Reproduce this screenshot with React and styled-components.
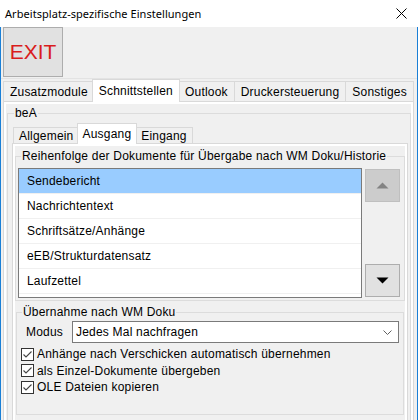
import React from "react";
import styled, { createGlobalStyle } from "styled-components";

const GlobalStyle = createGlobalStyle`
  html, body {
    margin: 0;
    padding: 0;
    background: #ffffff;
  }
  body {
    font-family: "Liberation Sans", Arial, sans-serif;
    font-size: 12px;
    letter-spacing: 0.2px;
    color: #000000;
  }
  * {
    box-sizing: border-box;
  }
`;

const Window = styled.div`
  width: 418px;
  height: 420px;
  overflow: hidden;
  display: flex;
  flex-direction: column;
  background: #ffffff;
`;

const TitleBar = styled.div`
  height: 27px;
  flex: none;
  display: flex;
  align-items: center;
  justify-content: space-between;
  padding: 0 11px 0 5px;
  font-family: "Noto Sans", sans-serif;
  font-size: 11px;
  letter-spacing: 0.05px;
  background: #ffffff;
`;

const Body = styled.div`
  flex: 1;
  min-height: 0;
  overflow: hidden;
  background: #f0f0f0;
  border-left: 1px solid #1a7fd6;
  border-right: 1px solid #1a7fd6;
`;

const Toolbar = styled.div`
  height: 52px;
  padding: 0 2px;
  display: flex;
  align-items: flex-start;
  border-bottom: 1px solid #e3e3e3;
`;

const ExitButton = styled.button`
  width: 60px;
  height: 50px;
  margin: 0;
  padding: 0;
  background: #e1e1e1;
  border: 1px solid #adadad;
  color: #d91c1c;
  font-family: "Liberation Sans", Arial, sans-serif;
  font-size: 21px;
`;

const TabControl = styled.div`
  margin: ${(p) => p.margin};
`;

const TabStrip = styled.div`
  display: flex;
  align-items: flex-end;
  height: ${(p) => p.height}px;
  padding-left: ${(p) => p.indent}px;
`;

const Tab = styled.div`
  position: relative;
  display: flex;
  align-items: center;
  padding: 0 ${(p) => p.pad}px;
  border: 1px solid #d9d9d9;
  border-bottom: none;
  white-space: nowrap;
  height: ${(p) => (p.$active ? p.tall + 1 : p.short)}px;
  margin: ${(p) => (p.$active ? "0 -2px -1px -2px" : "0 -1px 0 0")};
  background: ${(p) => (p.$active ? "#ffffff" : "#f0f0f0")};
  z-index: ${(p) => (p.$active ? 2 : 1)};
  padding-top: ${(p) => (p.$active ? 0 : 1)}px;
`;

const TabPanel = styled.div`
  border: 1px solid #d9d9d9;
  background: #ffffff;
  padding: 2px;
`;

const TabPage = styled.div`
  background: #f0f0f0;
  padding: ${(p) => p.pad};
`;

const Group = styled.fieldset`
  margin: ${(p) => p.margin};
  padding: ${(p) => p.pad};
  border: 1px solid #dcdcdc;
  min-width: 0;
`;

const Legend = styled.legend`
  margin-left: ${(p) => p.offset}px;
  padding: 0 1px;
  line-height: 14px;
  font-size: 12px;
`;

const OrderRow = styled.div`
  display: flex;
  margin: 5px 4px 0 2px;
  gap: 3px;
`;

const List = styled.div`
  width: 346px;
  height: 130px;
  background: #ffffff;
  border: 1px solid #7a7a7a;
`;

const ListItem = styled.div`
  height: 25px;
  display: flex;
  align-items: center;
  padding-left: 8px;
  border-bottom: 1px solid #f0f0f0;
  background: ${(p) => (p.$selected ? "#99ccff" : "#ffffff")};
`;

const ButtonColumn = styled.div`
  width: 35px;
  height: 130px;
  padding: 1px 0;
  display: flex;
  flex-direction: column;
  justify-content: space-between;
`;

const MoveButton = styled.button`
  width: 35px;
  height: 33px;
  margin: 0;
  padding: 0;
  display: flex;
  align-items: center;
  justify-content: center;
  background: ${(p) => (p.disabled ? "#cccccc" : "#e1e1e1")};
  border: 1px solid ${(p) => (p.disabled ? "#bfbfbf" : "#adadad")};
`;

const ModeRow = styled.div`
  display: flex;
  align-items: center;
  height: 22px;
  margin: 2px 4px 0 9px;
`;

const ModeLabel = styled.span`
  width: 46px;
`;

const Select = styled.div`
  flex: 1;
  height: 22px;
  display: flex;
  align-items: center;
  justify-content: space-between;
  padding: 0 6px 0 3px;
  background: #ffffff;
  border: 1px solid #7a7a7a;
`;

const CheckList = styled.div`
  margin-top: 3px;
  padding-left: 4px;
`;

const CheckRow = styled.label`
  display: flex;
  align-items: center;
  gap: 3px;
  height: 16.5px;
`;

const CloseIcon = () => (
  <svg width="11" height="11" viewBox="0 0 11 11">
    <path d="M0.5 0.5 L10.5 10.5 M10.5 0.5 L0.5 10.5" stroke="#000" strokeWidth="1" />
  </svg>
);

const Triangle = ({ up, color }) => (
  <svg width="13" height="7" viewBox="0 0 13 7">
    <polygon points={up ? "0.5,6.5 6.5,0.5 12.5,6.5" : "0.5,0.5 12.5,0.5 6.5,6.5"} fill={color} />
  </svg>
);

const Chevron = () => (
  <svg width="9" height="5" viewBox="0 0 9 5">
    <polyline points="0.5,0.5 4.5,4.5 8.5,0.5" fill="none" stroke="#606060" strokeWidth="1" />
  </svg>
);

const CheckBox = () => (
  <svg width="13" height="13" viewBox="0 0 13 13">
    <rect x="0.5" y="0.5" width="12" height="12" fill="#fff" stroke="#333" />
    <polyline points="2.5,6.5 5,9 10.5,3.5" fill="none" stroke="#444" strokeWidth="1.1" />
  </svg>
);

const outerTabs = ["Zusatzmodule", "Schnittstellen", "Outlook", "Druckersteuerung", "Sonstiges"];
const innerTabs = ["Allgemein", "Ausgang", "Eingang"];
const documents = [
  "Sendebericht",
  "Nachrichtentext",
  "Schriftsätze/Anhänge",
  "eEB/Strukturdatensatz",
  "Laufzettel",
];
const options = [
  "Anhänge nach Verschicken automatisch übernehmen",
  "als Einzel-Dokumente übergeben",
  "OLE Dateien kopieren",
];

const App = () => {
  return (
    <Window>
      <GlobalStyle />
      <TitleBar>
        <span>Arbeitsplatz-spezifische Einstellungen</span>
        <CloseIcon />
      </TitleBar>
      <Body>
        <Toolbar>
          <ExitButton>EXIT</ExitButton>
        </Toolbar>
        <TabControl margin="0 3px 0 2px">
          <TabStrip height={22} indent={0}>
            {outerTabs.map((t) => (
              <Tab key={t} $active={t === "Schnittstellen"} tall={22} short={20} pad={6}>
                {t}
              </Tab>
            ))}
          </TabStrip>
          <TabPanel>
            <TabPage pad="2px 0 0 0">
              <Group margin="0 0 0 1px" pad="0">
                <Legend offset={6}>beA</Legend>
                <TabControl margin="3px 2px 0 4px">
                  <TabStrip height={20} indent={1}>
                    {innerTabs.map((t) => (
                      <Tab key={t} $active={t === "Ausgang"} tall={20} short={16} pad={5}>
                        {t}
                      </Tab>
                    ))}
                  </TabStrip>
                  <TabPanel>
                    <TabPage pad="3px 0 40px 0">
                      <Group margin="0" pad="0 0 2px 0">
                        <Legend offset={5}>
                          Reihenfolge der Dokumente für Übergabe nach WM Doku/Historie
                        </Legend>
                        <OrderRow>
                          <List>
                            {documents.map((d, i) => (
                              <ListItem key={d} $selected={i === 0}>
                                {d}
                              </ListItem>
                            ))}
                          </List>
                          <ButtonColumn>
                            <MoveButton disabled>
                              <Triangle up color="#838383" />
                            </MoveButton>
                            <MoveButton>
                              <Triangle color="#000000" />
                            </MoveButton>
                          </ButtonColumn>
                        </OrderRow>
                      </Group>
                      <Group margin="4px 1px 0 1px" pad="0 0 18px 0">
                        <Legend offset={5}>Übernahme nach WM Doku</Legend>
                        <ModeRow>
                          <ModeLabel>Modus</ModeLabel>
                          <Select>
                            <span>Jedes Mal nachfragen</span>
                            <Chevron />
                          </Select>
                        </ModeRow>
                        <CheckList>
                          {options.map((o) => (
                            <CheckRow key={o}>
                              <CheckBox />
                              <span>{o}</span>
                            </CheckRow>
                          ))}
                        </CheckList>
                      </Group>
                    </TabPage>
                  </TabPanel>
                </TabControl>
              </Group>
            </TabPage>
          </TabPanel>
        </TabControl>
      </Body>
    </Window>
  );
};

export default App;
